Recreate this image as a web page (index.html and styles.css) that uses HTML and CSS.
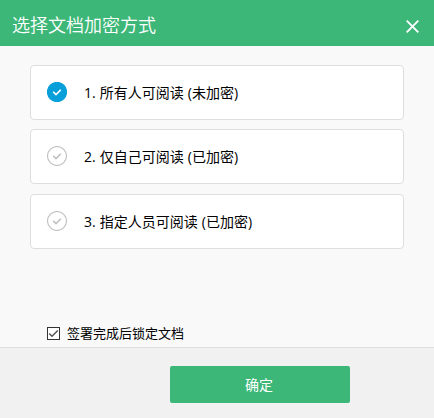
FILE: index.html
```html
<!DOCTYPE html>
<html lang="zh-CN">
<head>
<meta charset="utf-8">
<title>选择文档加密方式</title>
<link rel="stylesheet" href="styles.css">
</head>
<body>
<div class="dialog">
  <header class="header">
    <h1 class="title">选择文档加密方式</h1>
    <svg class="close" width="13" height="13" viewBox="0 0 13 13"><path d="M.7 .7L12.3 12.3M12.3 .7L.7 12.3"/></svg>
  </header>
  <main class="content">
    <div class="option selected">
      <svg class="mark" width="20" height="20" viewBox="0 0 20 20"><circle cx="10" cy="10" r="9.6"/><path d="M6.2 9.8L9 12.6L13.8 7.8"/></svg>
      <span class="label">1. 所有人可阅读 (未加密)</span>
    </div>
    <div class="option">
      <svg class="mark" width="20" height="20" viewBox="0 0 20 20"><circle cx="10" cy="10" r="9.5"/><path d="M6.2 9.8L9 12.6L13.8 7.8"/></svg>
      <span class="label">2. 仅自己可阅读 (已加密)</span>
    </div>
    <div class="option last">
      <svg class="mark" width="20" height="20" viewBox="0 0 20 20"><circle cx="10" cy="10" r="9.5"/><path d="M6.2 9.8L9 12.6L13.8 7.8"/></svg>
      <span class="label">3. 指定人员可阅读 (已加密)</span>
    </div>
    <div class="lock">
      <svg class="check" width="13" height="13" viewBox="0 0 13 13"><rect x=".5" y=".5" width="12" height="12"/><path d="M2.2 6.5L5 9.3L10.8 3.5"/></svg>
      <span>签署完成后锁定文档</span>
    </div>
  </main>
  <footer class="footer">
    <button class="confirm">确定</button>
  </footer>
</div>
</body>
</html>
```

FILE: styles.css
```css
* {
  box-sizing: border-box;
}

body {
  margin: 0;
  font-family: "Open Sans", "Noto Sans CJK SC", sans-serif;
  color: #000;
}

.dialog {
  display: flex;
  flex-direction: column;
  width: 434px;
  height: 418px;
  background: #f9f9f9;
}

.header {
  display: flex;
  align-items: flex-start;
  justify-content: space-between;
  height: 46px;
  padding: 12px 15px 0 12px;
  background: #3cb778;
  color: #fff;
}

.title {
  margin: 0;
  font-size: 18px;
  font-weight: 350;
  line-height: 26px;
}

.close {
  margin-top: 8px;
  stroke: #fff;
  stroke-width: 1.9;
  fill: none;
}

.content {
  display: flex;
  flex: 1;
  flex-direction: column;
  padding: 19px 30px 7px;
}

.option {
  display: flex;
  align-items: center;
  gap: 17px;
  height: 55px;
  margin-bottom: 9px;
  padding: 0 16px 1px;
  border: 1px solid #dedede;
  border-radius: 4px;
  background: #fff;
  font-size: 14px;
  line-height: 20px;
  word-spacing: .4px;
}

.option.last {
  margin-top: 1px;
}

.label {
  padding-top: 2px;
}

.mark {
  fill: none;
  stroke: #c0c0c0;
  stroke-width: 1.1;
}

.mark path {
  stroke-width: 1.6;
}

.selected .mark circle {
  fill: #069fd9;
  stroke: #069fd9;
}

.selected .mark path {
  stroke: #fff;
}

.lock {
  display: flex;
  align-items: center;
  gap: 7px;
  margin-top: auto;
  padding-left: 17px;
  font-size: 13px;
  line-height: 13px;
}

.check {
  fill: #fff;
  stroke: #333;
}

.check path {
  fill: none;
  stroke: #555;
  stroke-width: 1.5;
}

.footer {
  display: flex;
  height: 71px;
  padding: 18px 0 0 170px;
  border-top: 1px solid #dedede;
  background: #f1f1f1;
}

.confirm {
  width: 180px;
  height: 37px;
  padding: 0 2px 1px 0;
  border: 0;
  border-radius: 2px;
  background: #3cb778;
  color: #fff;
  font: inherit;
  font-size: 14px;
}
```
